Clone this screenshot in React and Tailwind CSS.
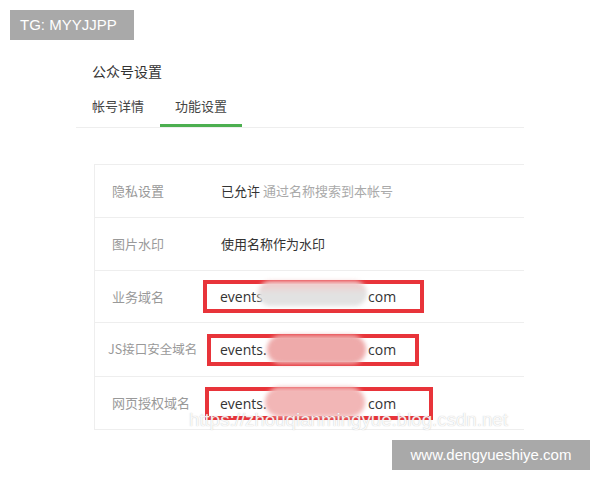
import React from 'react';

const cjk = { fontFamily: '"Noto Sans CJK SC", "Noto Sans", sans-serif' };
const latin = { fontFamily: '"Open Sans", "Liberation Sans", sans-serif' };

function DomainBox({ box, pad, gap, blob, dot }) {
  return (
    <div className={`relative flex items-center border-[4px] border-[#e8343a] ${box}`}>
      <span className={`${pad} ${gap} text-[14px] text-[#333]`} style={latin}>
        {dot ? 'events.' : 'events'}
      </span>
      <span className="text-[14px] text-[#333]" style={latin}>com</span>
      <span className={`absolute rounded-full blur-[2px] ${blob}`} />
    </div>
  );
}

const rows = [
  { label: '隐私设置', value: <span><span className="text-[#333]">已允许</span> <span className="text-[#aaa]">通过名称搜索到本帐号</span></span> },
  { label: '图片水印', value: <span className="text-[#333]">使用名称作为水印</span> },
];

export default function App() {
  return (
    <div className="relative w-[600px] h-[480px] overflow-hidden bg-white" style={cjk}>
      <div className="pl-[76px] pt-[61px] w-[524px]">
        <div className="pl-[16px] text-[14px] text-[#333] leading-[20px]">公众号设置</div>
        <div className="mt-[15px] flex border-b border-[#eee] text-[13px] text-[#444]">
          <div className="pl-[16px] w-[84px] pb-[10px] leading-[20px]">帐号详情</div>
          <div className="w-[82px] pb-[8px] leading-[20px] border-b-[3px] border-[#4caf50] text-center">功能设置</div>
        </div>
        <div className="ml-[18px] mt-[36px] border-l border-t border-[#eee] text-[13px]">
          {rows.map((r) => (
            <div key={r.label} className="flex items-center h-[53px] border-b border-[#eee]">
              <div className="w-[126px] pl-[17px] text-[#999]">{r.label}</div>
              {r.value}
            </div>
          ))}
          <div className="flex items-center h-[52px] border-b border-[#eee]">
            <div className="w-[108px] pl-[17px] text-[#999]">业务域名</div>
            <DomainBox
              box="w-[221px] h-[33px]"
              pad="pl-[13px]"
              gap="w-[161px]"
              blob="left-[51px] top-[-3px] w-[109px] h-[25px] bg-gradient-to-b from-[#f4c6c6] via-[#e2e2e2] to-[#e2e2e2]"
            />
          </div>
          <div className="flex items-center h-[54px] border-b border-[#eee]">
            <div className="w-[112px] pl-[13px] text-[12.5px] text-[#999] whitespace-nowrap">JS接口安全域名</div>
            <DomainBox
              dot
              box="w-[212px] h-[32px]"
              pad="pl-[9px]"
              gap="w-[157px]"
              blob="left-[56px] top-[-3px] w-[99px] h-[29px] bg-[#eeaaaa]"
            />
          </div>
          <div className="flex items-center h-[53px] border-b border-[#eee]">
            <div className="w-[110px] pl-[17px] text-[#999]">网页授权域名</div>
            <DomainBox
              dot
              box="w-[228px] h-[33px]"
              pad="pl-[11px]"
              gap="w-[159px]"
              blob="left-[56px] top-[-4px] w-[100px] h-[30px] bg-[#f2b6b6]"
            />
          </div>
        </div>
      </div>

      <div className="absolute left-[189px] top-[406px] text-[18.7px] text-white/90" style={{ fontFamily: '"Liberation Sans", sans-serif', textShadow: '0 0 1px rgba(120,120,120,0.5)' }}>
        https://zhouqianmingyue.blog.csdn.net
      </div>

      <div className="absolute left-[10px] top-[10px] w-[124px] h-[30px] bg-[#a9a9a9] text-white text-[15px] flex items-center pl-[10px]" style={{ fontFamily: '"Liberation Sans", sans-serif' }}>
        TG: MYYJJPP
      </div>
      <div className="absolute left-[392px] top-[440px] w-[198px] h-[30px] bg-[#a9a9a9] text-white text-[15px] flex items-center justify-center" style={{ fontFamily: '"Liberation Sans", sans-serif' }}>
        www.dengyueshiye.com
      </div>
    </div>
  );
}
